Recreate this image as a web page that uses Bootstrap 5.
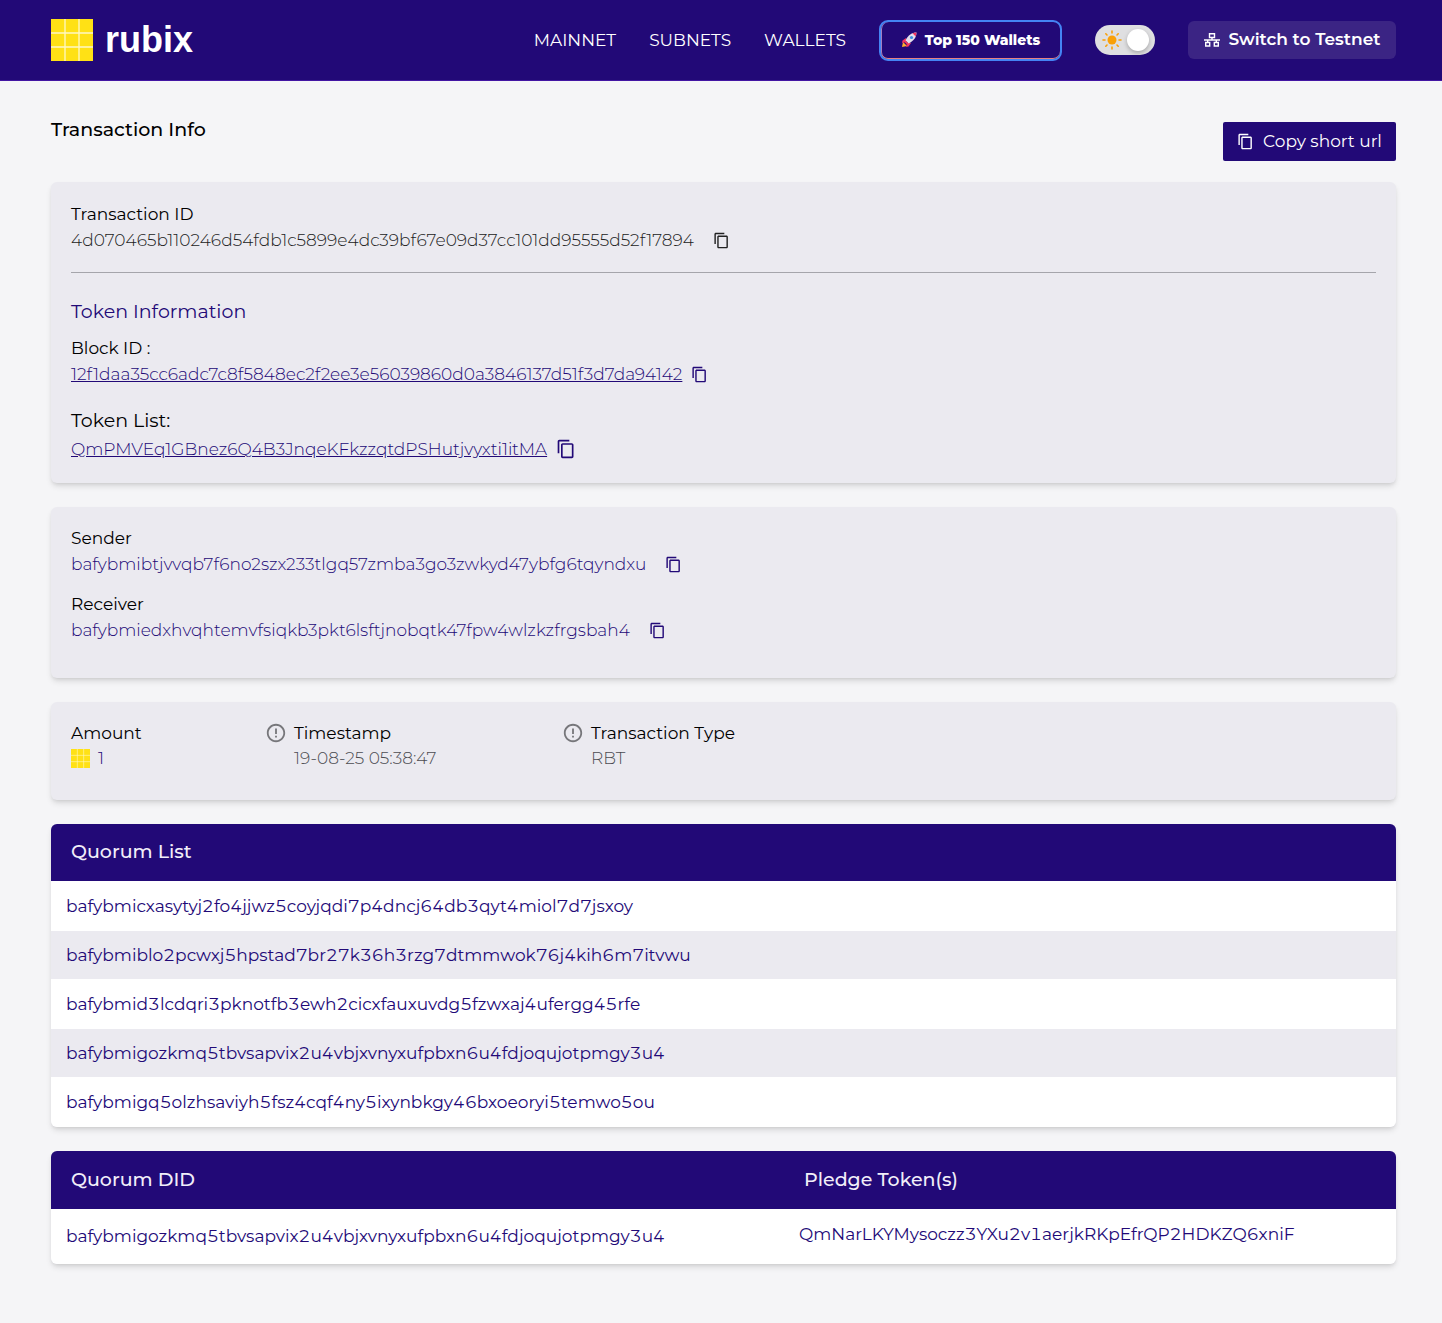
<!DOCTYPE html>
<html lang="en">
<head>
<meta charset="utf-8">
<meta name="viewport" content="width=device-width, initial-scale=1">
<title>Rubix Explorer - Transaction Info</title>
<link href="https://cdn.jsdelivr.net/npm/bootstrap@5.3.0/dist/css/bootstrap.min.css" rel="stylesheet">
<style>
  :root { --ink: #220977; --panel: #ebeaf0; }
  body { font-family: Montserrat, Inter, sans-serif; font-size: 17px; line-height: 26px; color: #000; background: #f5f5f7; }
  .page-x { padding-left: 51px; padding-right: 46px; }
  .topbar { background: var(--ink); border-bottom: 1px solid #4316a3; min-height: 81px; }
  .brand-text { font-family: "Liberation Sans", sans-serif; font-weight: 700; font-size: 36px; line-height: 42px; }
  .menu { gap: 33px; }
  .menu-link { color: #fff; text-decoration: none; }
  .btn-top { min-width: 183px; height: 41px; border: 2px solid #4484f4; border-radius: 9px; box-shadow: inset 0 -1px 0 #e5807f, inset 1px 0 0 #a27fc0; color: #fff; font-size: 14px; font-weight: 800; }
  .btn-net { min-width: 208px; height: 38px; border: 0; border-radius: 6px; background: #3b2484; color: #fff; font-size: 17px; font-weight: 600; gap: 9px; }
  .btn-copy { min-width: 173px; height: 39px; border: 0; border-radius: 2px; background: var(--ink); color: #fff; font-size: 17px; gap: 9px; }
  .btn-top:hover, .btn-net:hover, .btn-copy:hover { color: #fff; background: #35189a; }
  .theme-switch { width: 60px; height: 30px; padding: 0 6px 0 7px; border-radius: 15px; background: #dfdfe1; cursor: pointer; }
  .knob { width: 22px; height: 22px; border-radius: 50%; background: #fff; box-shadow: 0 2px 4px rgba(0,0,0,.25); }
  .page-title { font-size: 19px; line-height: 26px; font-weight: 500; padding-top: 36px; }
  .title-row { margin-bottom: 21px; }
  .btn-wrap { padding-top: 41px; }
  .panel { border-radius: 6px; background: var(--panel); box-shadow: 0 4px 6px -1px rgba(0,0,0,.12), 0 2px 4px -2px rgba(0,0,0,.12); margin-bottom: 24px; overflow: hidden; }
  .panel-body { padding: 18px 20px 29px; }
  .token-body { padding-top: 19px; padding-bottom: 21px; }
  .party-body { padding-bottom: 35px; }
  .rule { margin: 19px 0 25px; border-top: 1px solid #77777d; opacity: .6; }
  .sub-head { font-size: 19px; line-height: 28px; font-weight: 400; margin: 0; }
  .token-head { margin-bottom: 9px; }
  .list-head { margin: 20px 0 1px; }
  .hash { display: flex; align-items: center; gap: 19px; font-weight: 350; }
  .hash-link { gap: 9px; }
  .party { margin-bottom: 14px; }
  .ink { color: var(--ink); }
  .icon-btn { border: 0; padding: 0; background: none; color: inherit; display: flex; }
  .soft { color: #222; }
  .muted { color: #4c4c52; }
  .fact { display: flex; gap: 7px; }
  .fact-a { width: 194px; }
  .fact-b { width: 297px; }
  .fact-icon { color: #77777b; margin-top: 2px; }
  .fact-value { font-weight: 350; line-height: 25px; }
  .data-table { font-weight: 450; font-variant-numeric: tabular-nums; }
  .data-table > thead th { background: var(--ink); color: #f1eef9; font-size: 19px; font-weight: 500; line-height: 26px; padding: 15px 20px 16px; border: 0; }
  .data-table > tbody td { color: var(--ink); padding: 12px 15px; border: 0; background: #fff; }
  .data-table > tbody tr:nth-child(even) td { background: var(--panel); padding-top: 11px; padding-bottom: 11px; }
  .did-table > thead th { padding-top: 16px; padding-bottom: 16px; }
  .did-table > tbody td { padding-bottom: 17px; }
  .did-table > tbody td:first-child { padding-top: 14px; padding-bottom: 15px; }
  .col-did { width: 54.5%; }
</style>
<script src="https://cdn.jsdelivr.net/npm/bootstrap@5.3.0/dist/js/bootstrap.bundle.min.js"></script>
</head>
<body>
<svg class="d-none" aria-hidden="true">
  <symbol id="copy" viewBox="0 0 24 24"><path fill="currentColor" d="M16 1H4c-1.100 0-2 .9-2 2v14h2V3h12V1zm3 4H8c-1.100 0-2 .9-2 2v14c0 1.100.9 2 2 2h11c1.100 0 2-.9 2-2V7c0-1.100-.9-2-2-2zm0 16H8V7h11v14z"/></symbol>
  <symbol id="info" viewBox="0 0 24 24"><path fill="currentColor" d="M11 15h2v2h-2zm0-8h2v6h-2zm.99-5C6.470 2 2 6.480 2 12s4.470 10 9.990 10C17.520 22 22 17.520 22 12S17.520 2 11.990 2zM12 20c-4.420 0-8-3.580-8-8s3.580-8 8-8 8 3.580 8 8-3.580 8-8 8z"/></symbol>
  <symbol id="cube" viewBox="0 0 42 42"><path fill="#ffe115" d="M0 0h42v42H0z"/><path stroke="#fff8c4" stroke-width="1.300" d="M14 0v42M28 0v42M0 14h42M0 28h42"/></symbol>
</svg>

<header class="topbar page-x d-flex align-items-center justify-content-between">
  <a href="#" class="d-flex align-items-center text-white text-decoration-none">
    <svg width="42" height="42" class="me-2" aria-hidden="true"><use href="#cube"/></svg>
    <span class="brand-text ms-1">rubix</span>
  </a>
  <nav class="menu d-flex align-items-center">
    <a class="menu-link" href="#">MAINNET</a>
    <a class="menu-link" href="#">SUBNETS</a>
    <a class="menu-link" href="#">WALLETS</a>
    <button type="button" class="btn btn-top d-flex align-items-center justify-content-center p-0">
      <svg width="16" height="16" viewBox="0 0 16 16" class="me-2" aria-hidden="true">
        <path fill="#ffb02e" d="M1 15l1-5 4 4z"/>
        <path fill="#f2355f" d="M5 6L1.500 8.500 1 11l4-1zM10 11l-2.500 3.500L5 15l1-4z"/>
        <path fill="#e3dfec" d="M15.500.5C11 .5 7 3 4.500 8.500l3 3C13 9 15.500 5 15.500.5z"/>
        <path fill="#f2355f" d="M15.500.5l-4 .8 3.200 3.200zM4.500 8.500l3 3-1.500 1-2.500-2.500z"/>
        <circle cx="10.500" cy="5.500" r="1.600" fill="#3b8fe0"/>
      </svg>Top 150 Wallets</button>
    <label class="theme-switch d-flex align-items-center justify-content-between" for="theme">
      <input class="visually-hidden" type="checkbox" id="theme" aria-label="Light theme" checked>
      <svg width="20" height="20" viewBox="0 0 20 20" aria-hidden="true"><circle cx="10" cy="10" r="4.500" fill="#f9a008"/><path stroke="#f9a008" stroke-width="1.600" stroke-linecap="round" d="M10 1v2M10 17v2M1 10h2M17 10h2M3.800 3.800l1.200 1.200M15 15l1.200 1.200M3.800 16.200L5 15M15 5l1.200-1.200"/></svg>
      <span class="knob"></span>
    </label>
    <button type="button" class="btn btn-net d-flex align-items-center justify-content-center p-0">
      <svg width="16" height="16" viewBox="0 0 16 16" fill="none" stroke="currentColor" stroke-width="1.400" aria-hidden="true"><path d="M5.500 1.700h5v3.800h-5zM1.700 10.500h4v3.500h-4zM10.300 10.500h4V14h-4zM8 5.500V8M0 8h16M3.700 8v2.500M12.300 8v2.500"/></svg>Switch to Testnet</button>
  </nav>
</header>

<main class="page-x pb-4">
  <div class="title-row d-flex justify-content-between align-items-start">
    <h1 class="page-title mb-0">Transaction Info</h1>
    <div class="btn-wrap">
      <button type="button" class="btn btn-copy d-flex align-items-center justify-content-center p-0"><svg width="17" height="17" aria-hidden="true"><use href="#copy"/></svg>Copy short url</button>
    </div>
  </div>

  <section class="panel">
    <div class="panel-body token-body">
      <div>Transaction ID</div>
      <div class="hash soft"><span class="text-break">4d070465b110246d54fdb1c5899e4dc39bf67e09d37cc101dd95555d52f17894</span><button class="icon-btn" aria-label="Copy transaction ID"><svg width="17" height="17"><use href="#copy"/></svg></button></div>
      <hr class="rule">
      <h2 class="sub-head token-head ink">Token Information</h2>
      <div>Block ID :</div>
      <div class="hash hash-link ink"><a href="#" class="ink text-break">12f1daa35cc6adc7c8f5848ec2f2ee3e56039860d0a3846137d51f3d7da94142</a><button class="icon-btn" aria-label="Copy block ID"><svg width="17" height="17"><use href="#copy"/></svg></button></div>
      <h3 class="sub-head list-head">Token List:</h3>
      <div class="hash hash-link ink"><a href="#" class="ink text-break">QmPMVEq1GBnez6Q4B3JnqeKFkzzqtdPSHutjvyxti1itMA</a><button class="icon-btn" aria-label="Copy token"><svg width="20" height="20"><use href="#copy"/></svg></button></div>
    </div>
  </section>

  <section class="panel">
    <div class="panel-body party-body">
      <div>Sender</div>
      <div class="hash party ink"><span class="text-break">bafybmibtjvvqb7f6no2szx233tlgq57zmba3go3zwkyd47ybfg6tqyndxu</span><button class="icon-btn" aria-label="Copy sender"><svg width="17" height="17"><use href="#copy"/></svg></button></div>
      <div>Receiver</div>
      <div class="hash ink"><span class="text-break">bafybmiedxhvqhtemvfsiqkb3pkt6lsftjnobqtk47fpw4wlzkzfrgsbah4</span><button class="icon-btn" aria-label="Copy receiver"><svg width="17" height="17"><use href="#copy"/></svg></button></div>
    </div>
  </section>

  <section class="panel">
    <div class="panel-body d-flex flex-wrap">
      <div class="fact-a">
        <div>Amount</div>
        <div class="fact-value d-flex align-items-center ink"><svg width="19" height="19" class="me-2" aria-hidden="true"><use href="#cube"/></svg>1</div>
      </div>
      <div class="fact fact-b">
        <svg width="22" height="22" class="fact-icon" aria-hidden="true"><use href="#info"/></svg>
        <div><div>Timestamp</div><div class="fact-value muted">19-08-25 05:38:47</div></div>
      </div>
      <div class="fact">
        <svg width="22" height="22" class="fact-icon" aria-hidden="true"><use href="#info"/></svg>
        <div><div>Transaction Type</div><div class="fact-value muted">RBT</div></div>
      </div>
    </div>
  </section>

  <section class="panel">
    <table class="table data-table mb-0">
      <thead><tr><th scope="col">Quorum List</th></tr></thead>
      <tbody>
        <tr><td>bafybmicxasytyj2fo4jjwz5coyjqdi7p4dncj64db3qyt4miol7d7jsxoy</td></tr>
        <tr><td>bafybmiblo2pcwxj5hpstad7br27k36h3rzg7dtmmwok76j4kih6m7itvwu</td></tr>
        <tr><td>bafybmid3lcdqri3pknotfb3ewh2cicxfauxuvdg5fzwxaj4ufergg45rfe</td></tr>
        <tr><td>bafybmigozkmq5tbvsapvix2u4vbjxvnyxufpbxn6u4fdjoqujotpmgy3u4</td></tr>
        <tr><td>bafybmigq5olzhsaviyh5fsz4cqf4ny5ixynbkgy46bxoeoryi5temwo5ou</td></tr>
      </tbody>
    </table>
  </section>

  <section class="panel">
    <table class="table data-table did-table mb-0">
      <thead><tr><th scope="col" class="col-did">Quorum DID</th><th scope="col">Pledge Token(s)</th></tr></thead>
      <tbody>
        <tr><td>bafybmigozkmq5tbvsapvix2u4vbjxvnyxufpbxn6u4fdjoqujotpmgy3u4</td><td>QmNarLKYMysoczz3YXu2v1aerjkRKpEfrQP2HDKZQ6xniF</td></tr>
      </tbody>
    </table>
  </section>
</main>
</body>
</html>
